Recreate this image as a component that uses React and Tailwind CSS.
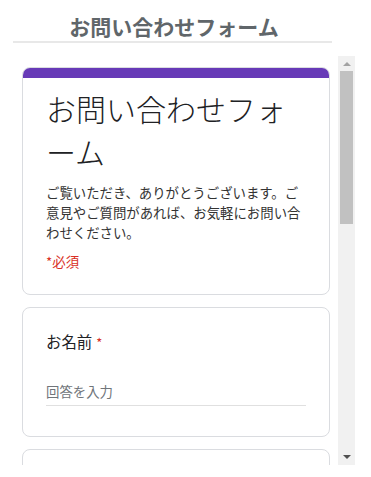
const jp = { fontFamily: '"Noto Sans CJK JP", "Noto Sans", sans-serif' }

function Card({ children, accent }) {
  return (
    <div className="overflow-hidden rounded-lg border border-[#dadce0] bg-white">
      {accent && <div className="h-[10px] bg-[#673ab7]" />}
      {children}
    </div>
  )
}

function Scrollbar() {
  return (
    <div className="flex w-[17px] shrink-0 flex-col bg-[#f1f1f1]">
      <div className="flex h-[15px] items-center justify-center">
        <div className="h-0 w-0 border-x-[4px] border-b-[4px] border-x-transparent border-b-[#a3a3a3]" />
      </div>
      <div className="mx-[2px] h-[153px] bg-[#c1c1c1]" />
      <div className="flex-1" />
      <div className="flex h-[17px] items-center justify-center">
        <div className="h-0 w-0 border-x-[4px] border-t-[4px] border-x-transparent border-t-[#505050]" />
      </div>
    </div>
  )
}

export default function App() {
  return (
    <div className="h-[477px] w-[371px] overflow-hidden bg-white" style={jp}>
      <div className="ml-[13px] w-[319px] border-b-2 border-[#e8e8e8] pb-[3px] pt-[14px] text-center">
        <h1 className="pl-[3px] text-[21px] font-bold leading-[24px] text-[#60666a]">お問い合わせフォーム</h1>
      </div>

      <div className="ml-[13px] mt-[13px] flex h-[409px] w-[342px]">
        <div className="flex-1 overflow-hidden pl-[9px] pr-[8px] pt-[11px]">
          <div className="space-y-[12px]">
            <Card accent>
              <div className="px-[23px] pb-[23px] pt-[9px] text-[#202124]">
                <h2 className="text-[30px] font-light leading-[43px]">お問い合わせフォーム</h2>
                <p className="mt-[9px] text-[13.4px] leading-[20px] text-[#333]">
                  ご覧いただき、ありがとうございます。ご意見やご質問があれば、お気軽にお問い合わせください。
                </p>
                <p className="mt-[9px] text-[13.4px] leading-[20px] text-[#d93025]">*必須</p>
              </div>
            </Card>

            <Card>
              <div className="px-[23px] pb-[30px] pt-[21px]">
                <p className="text-[15.4px] leading-[24px] text-[#202124]">
                  お名前<span className="ml-[4px] text-[13px] text-[#d93025]">*</span>
                </p>
                <div className="mt-[26px] border-b border-[#e0e0e0] pb-[4px] text-[13.4px] leading-[20px] text-[#70757a]">
                  回答を入力
                </div>
              </div>
            </Card>

            <Card>
              <div className="h-[120px]" />
            </Card>
          </div>
        </div>
        <Scrollbar />
      </div>
    </div>
  )
}
